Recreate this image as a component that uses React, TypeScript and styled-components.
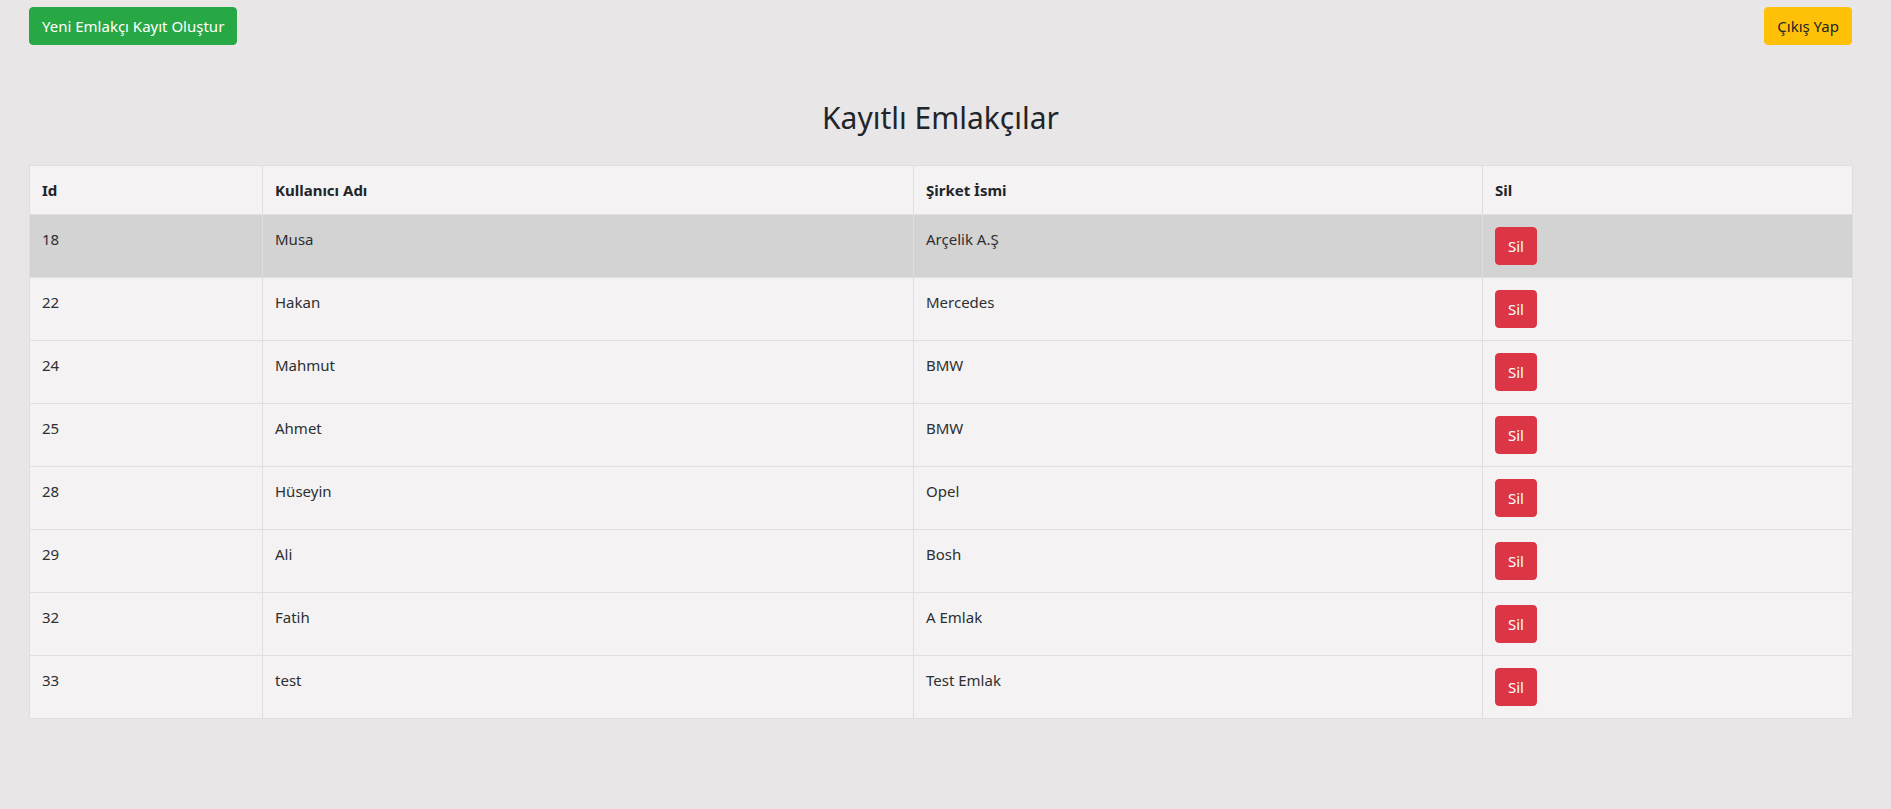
import React from "react";
import styled, { createGlobalStyle } from "styled-components";

const GlobalStyle = createGlobalStyle`
  html, body {
    margin: 0;
    padding: 0;
    background: #e8e6e7;
  }
  body {
    font-family: "Noto Sans", "Open Sans", "DejaVu Sans", sans-serif;
    font-size: 15px;
    line-height: 24px;
    color: #212529;
  }
  * { box-sizing: border-box; }
`;

const Page = styled.div`
  min-height: 809px;
  padding: 7px 39px 40px 29px;
  background: #e8e6e7;
`;

const TopBar = styled.div`
  display: flex;
  justify-content: space-between;
  align-items: flex-start;
`;

const Button = styled.button<{ $variant: "success" | "warning" | "danger" }>`
  font-family: inherit;
  font-size: 15px;
  line-height: 24px;
  height: 38px;
  padding: 6px 12px;
  border-radius: 4px;
  border: 1px solid transparent;
  cursor: pointer;
  background: ${(p) =>
    p.$variant === "success" ? "#28a745" : p.$variant === "warning" ? "#ffc107" : "#dc3545"};
  border-color: ${(p) =>
    p.$variant === "success" ? "#28a745" : p.$variant === "warning" ? "#ffc107" : "#dc3545"};
  color: ${(p) => (p.$variant === "warning" ? "#212529" : "#ffffff")};
`;

const Title = styled.h2`
  margin: 55px 0 29px;
  text-align: center;
  font-weight: 400;
  font-size: 30px;
  line-height: 36px;
  color: #212529;
`;

const Table = styled.table`
  width: 100%;
  border-collapse: collapse;
  background: #f4f2f3;
  border: 1px solid #e0dedf;
  table-layout: fixed;
`;

const Th = styled.th<{ $w: number }>`
  width: ${(p) => p.$w}px;
  text-align: left;
  font-weight: 700;
  padding: 12px;
  line-height: 24px;
  border: 1px solid #e0dedf;
  vertical-align: top;
`;

const Row = styled.tr<{ $active?: boolean }>`
  background: ${(p) => (p.$active ? "#d4d3d4" : "transparent")};
`;

const Td = styled.td`
  padding: 12px;
  line-height: 24px;
  border: 1px solid #e0dedf;
  vertical-align: top;
  color: #2d2f31;
`;

const rows = [
  { id: 18, user: "Musa", company: "Arçelik A.Ş" },
  { id: 22, user: "Hakan", company: "Mercedes" },
  { id: 24, user: "Mahmut", company: "BMW" },
  { id: 25, user: "Ahmet", company: "BMW" },
  { id: 28, user: "Hüseyin", company: "Opel" },
  { id: 29, user: "Ali", company: "Bosh" },
  { id: 32, user: "Fatih", company: "A Emlak" },
  { id: 33, user: "test", company: "Test Emlak" },
];

export default function App() {
  return (
    <>
      <GlobalStyle />
      <Page>
        <TopBar>
          <Button $variant="success">Yeni Emlakçı Kayıt Oluştur</Button>
          <Button $variant="warning">Çıkış Yap</Button>
        </TopBar>
        <Title>Kayıtlı Emlakçılar</Title>
        <Table>
          <thead>
            <tr>
              <Th $w={233}>Id</Th>
              <Th $w={651}>Kullanıcı Adı</Th>
              <Th $w={569}>Şirket İsmi</Th>
              <Th $w={370}>Sil</Th>
            </tr>
          </thead>
          <tbody>
            {rows.map((r, i) => (
              <Row key={r.id} $active={i === 0}>
                <Td>{r.id}</Td>
                <Td>{r.user}</Td>
                <Td>{r.company}</Td>
                <Td>
                  <Button $variant="danger">Sil</Button>
                </Td>
              </Row>
            ))}
          </tbody>
        </Table>
      </Page>
    </>
  );
}
